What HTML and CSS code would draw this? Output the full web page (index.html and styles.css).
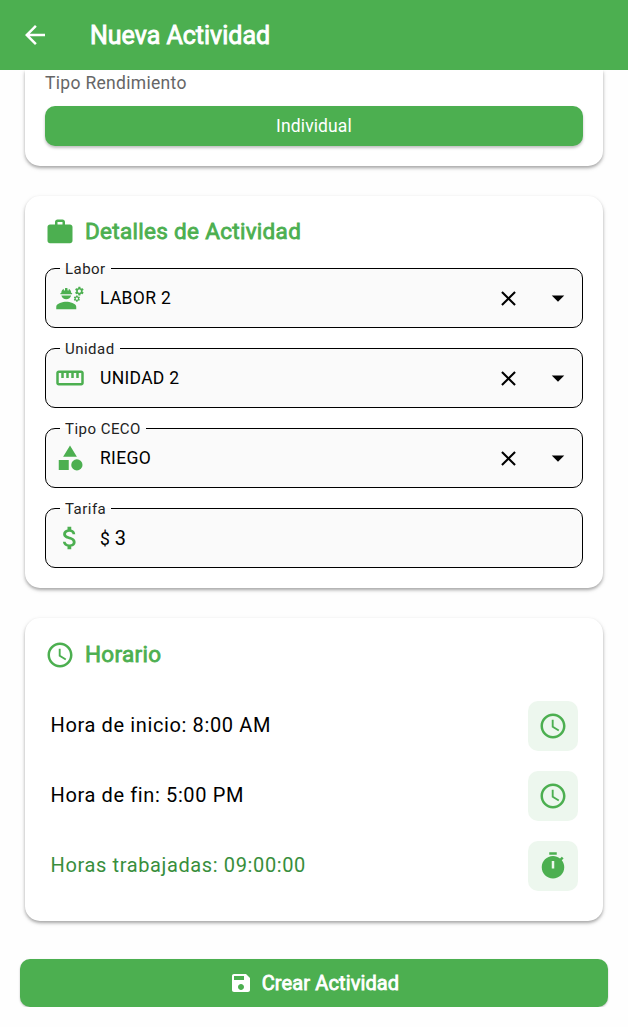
FILE: index.html
```html
<!DOCTYPE html>
<html lang="es">
<head>
<meta charset="utf-8">
<title>Nueva Actividad</title>
<link rel="stylesheet" href="styles.css">
</head>
<body>
<svg class="sprite" aria-hidden="true">
  <symbol id="clock" viewBox="0 0 24 24"><path d="M11.99 2C6.47 2 2 6.48 2 12s4.47 10 9.99 10C17.52 22 22 17.52 22 12S17.52 2 11.99 2zM12 20c-4.42 0-8-3.58-8-8s3.58-8 8-8 8 3.58 8 8-3.58 8-8 8zM12.5 7H11v6l5.25 3.15.75-1.23-4.5-2.67z"/></symbol>
  <symbol id="close" viewBox="0 0 24 24"><path d="M19 6.41L17.59 5 12 10.59 6.41 5 5 6.41 10.59 12 5 17.59 6.41 19 12 13.41 17.59 19 19 17.59 13.41 12z"/></symbol>
  <symbol id="drop" viewBox="0 0 24 24"><path d="M7 10l5 5 5-5z"/></symbol>
</svg>

<header class="app-bar">
  <svg class="icon" viewBox="0 0 24 24"><path d="M20 11H7.83l5.59-5.59L12 4l-8 8 8 8 1.41-1.41L7.83 13H20v-2z"/></svg>
  <h1 class="app-title">Nueva Actividad</h1>
</header>

<main class="content">
  <section class="card card-scrolled">
    <p class="caption">Tipo Rendimiento</p>
    <button class="segment">Individual</button>
  </section>

  <section class="card card-details">
    <h2 class="card-title">
      <svg class="icon" viewBox="0 0 24 24"><path d="M20 6h-4V4c0-1.11-.89-2-2-2h-4c-1.11 0-2 .89-2 2v2H4c-1.11 0-1.99.89-1.99 2L2 19c0 1.11.89 2 2 2h16c1.11 0 2-.89 2-2V8c0-1.11-.89-2-2-2zm-6 0h-4V4h4v2z"/></svg>
      <span>Detalles de Actividad</span>
    </h2>
    <fieldset class="field">
      <legend>Labor</legend>
      <div class="field-row">
        <svg class="icon green" viewBox="0 0 24 24"><path d="M9 15c-2.67 0-8 1.34-8 4v2h16v-2c0-2.66-5.33-4-8-4zM4.74 9H13.26c.27 0 .49-.22.49-.49v-.02c0-.27-.22-.49-.49-.49H13c0-1.48-.81-2.75-2-3.45v.95c0 .28-.22.5-.5.5s-.5-.22-.5-.5V4.14C9.68 4.06 9.35 4 9 4s-.68.06-1 .14V5.5c0 .28-.22.5-.5.5S7 5.78 7 5.5v-.95C5.81 5.25 5 6.52 5 8h-.26c-.27 0-.49.22-.49.49v.03c0 .26.22.48.49.48zM5.1 10c.4 1.8 2 3 3.9 3s3.5-1.2 3.9-3z"/><path d="M21.98 6.23l.93-.83-.75-1.3-1.19.39c-.14-.11-.3-.2-.47-.27L20.25 3h-1.5l-.25 1.22c-.17.07-.33.16-.48.27l-1.18-.39-.75 1.3.93.83c-.02.17-.02.35 0 .52l-.93.85.75 1.3 1.2-.38c.13.1.28.18.43.25l.28 1.23h1.5l.27-1.22c.16-.07.3-.15.44-.25l1.19.38.75-1.3-.93-.85c.03-.19.02-.36.01-.53zM19.5 7.75c-.69 0-1.25-.56-1.25-1.25s.56-1.25 1.25-1.25 1.25.56 1.25 1.25-.56 1.25-1.25 1.25zM19.4 10.79l-.85.28c-.1-.08-.21-.14-.33-.19l-.18-.88h-1.07l-.18.87c-.12.05-.24.12-.34.19l-.84-.28-.54.93.66.59c-.01.13-.01.25 0 .37l-.66.61.54.93.86-.27c.1.07.2.13.31.18l.18.88h1.07l.19-.87c.11-.05.22-.11.32-.18l.85.27.54-.93-.66-.61c.01-.13.01-.25 0-.37l.66-.59-.53-.93zm-1.9 2.6c-.49 0-.89-.4-.89-.89s.4-.89.89-.89.89.4.89.89-.4.89-.89.89z"/></svg>
        <span class="value">LABOR 2</span>
        <svg class="icon close"><use href="#close"/></svg>
        <svg class="icon"><use href="#drop"/></svg>
      </div>
    </fieldset>
    <fieldset class="field">
      <legend>Unidad</legend>
      <div class="field-row">
        <svg class="icon green" viewBox="0 0 24 24"><path d="M21 6H3c-1.1 0-2 .9-2 2v8c0 1.1.9 2 2 2h18c1.1 0 2-.9 2-2V8c0-1.1-.9-2-2-2zm0 10H3V8h2v4h2V8h2v4h2V8h2v4h2V8h2v4h2V8h2v8z"/></svg>
        <span class="value">UNIDAD 2</span>
        <svg class="icon close"><use href="#close"/></svg>
        <svg class="icon"><use href="#drop"/></svg>
      </div>
    </fieldset>
    <fieldset class="field">
      <legend>Tipo CECO</legend>
      <div class="field-row">
        <svg class="icon green" viewBox="0 0 24 24"><path d="M12 2l-5.5 9h11zM3 13.5h8v8H3z"/><circle cx="17.5" cy="17.5" r="4.5"/></svg>
        <span class="value">RIEGO</span>
        <svg class="icon close"><use href="#close"/></svg>
        <svg class="icon"><use href="#drop"/></svg>
      </div>
    </fieldset>
    <fieldset class="field">
      <legend>Tarifa</legend>
      <div class="field-row">
        <svg class="icon green" viewBox="0 0 24 24"><path d="M11.8 10.9c-2.27-.59-3-1.2-3-2.15 0-1.09 1.01-1.85 2.7-1.85 1.78 0 2.44.85 2.5 2.1h2.21c-.07-1.72-1.12-3.3-3.21-3.81V3h-3v2.16c-1.94.42-3.5 1.68-3.5 3.61 0 2.31 1.91 3.46 4.7 4.13 2.5.6 3 1.48 3 2.41 0 .69-.49 1.79-2.7 1.79-2.06 0-2.87-.92-2.98-2.1h-2.2c.12 2.19 1.76 3.42 3.68 3.83V21h3v-2.15c1.95-.37 3.5-1.5 3.5-3.55 0-2.84-2.43-3.81-4.7-4.4z"/></svg>
        <span class="value">$ <span class="amount">3</span></span>
      </div>
    </fieldset>
  </section>

  <section class="card card-schedule">
    <h2 class="card-title">
      <svg class="icon"><use href="#clock"/></svg>
      <span>Horario</span>
    </h2>
    <div class="time-list">
      <div class="time-row"><span class="time">Hora de inicio: 8:00 AM</span><button class="tile"><svg class="icon"><use href="#clock"/></svg></button></div>
      <div class="time-row"><span class="time">Hora de fin: 5:00 PM</span><button class="tile"><svg class="icon"><use href="#clock"/></svg></button></div>
      <div class="time-row total"><span class="time">Horas trabajadas: 09:00:00</span><button class="tile"><svg class="icon" viewBox="0 0 24 24"><path fill-rule="evenodd" d="M15 1H9v2h6V1zm-4 13h2V8h-2v6zm8.03-6.61l1.42-1.42c-.43-.51-.9-.99-1.41-1.41l-1.42 1.42C16.07 4.74 14.12 4 12 4c-4.97 0-9 4.03-9 9s4.02 9 9 9 9-4.03 9-9c0-2.12-.74-4.07-1.97-5.61z"/></svg></button></div>
    </div>
  </section>

  <button class="submit">
    <svg class="icon" viewBox="0 0 24 24"><path d="M17 3H5c-1.11 0-2 .9-2 2v14c0 1.1.89 2 2 2h14c1.1 0 2-.9 2-2V7l-4-4zm-5 16c-1.66 0-3-1.34-3-3s1.34-3 3-3 3 1.34 3 3-1.34 3-3 3zm3-10H5V5h10v4z"/></svg>
    <span>Crear Actividad</span>
  </button>
</main>
</body>
</html>
```
FILE: styles.css
```css
* { box-sizing: border-box; }
body {
  margin: 0;
  background: #fefefe;
  color: #000;
  font-family: Roboto, sans-serif;
}
h1, h2, p { margin: 0; font-weight: 400; }
button { border: 0; padding: 0; font-family: inherit; }
.sprite { position: absolute; width: 0; height: 0; }
.icon { display: block; flex: none; width: 30px; height: 30px; fill: currentColor; }
.green { color: #4caf50; }

.app-bar {
  display: flex;
  align-items: center;
  gap: 40px;
  height: 70px;
  padding-left: 20px;
  background: #4caf50;
  color: #fff;
}
.app-title {
  padding-top: 2px;
  font-size: 25px;
  line-height: 30px;
  -webkit-text-stroke: 0.9px currentColor;
}

.content { display: flex; flex-direction: column; }
.card {
  margin: 0 25px 30px;
  padding: 20px;
  border-radius: 15px;
  background: #fff;
  box-shadow: 0 2px 3px rgba(0, 0, 0, .25), 0 2px 5px rgba(0, 0, 0, .13);
}
.card-scrolled {
  height: 95.5px;
  padding-top: 2px;
  border-radius: 0 0 15px 15px;
  clip-path: inset(0 -10px -10px);
}
.caption {
  color: #666;
  font-size: 17.5px;
  line-height: 22px;
  letter-spacing: .31px;
}
.segment {
  display: block;
  width: 100%;
  height: 40px;
  margin-top: 12px;
  border-radius: 10px;
  background: #4caf50;
  color: #fff;
  font-size: 17.5px;
  letter-spacing: .12px;
  box-shadow: 0 2px 3px rgba(0, 0, 0, .25);
}

.card-title {
  display: flex;
  align-items: center;
  gap: 10px;
  height: 30px;
  color: #4caf50;
  font-size: 22.5px;
  letter-spacing: .3px;
  -webkit-text-stroke: .8px currentColor;
}
.card-title .icon { -webkit-text-stroke: 0; }
.card-details { height: 392.5px; }
.card-details .card-title { margin-bottom: 14.5px; }
.card-details .card-title .icon { margin-top: 2px; }

.field {
  height: 68px;
  min-width: 0;
  margin: 0 0 12px;
  padding: 0;
  border: 1px solid #000;
  border-radius: 10px;
  background: #fafafa;
}
.field legend {
  height: 17px;
  margin-left: 14px;
  padding: 0 5px;
  color: #222;
  font-size: 15px;
  line-height: 19px;
  letter-spacing: .47px;
}
.field-row {
  display: flex;
  align-items: center;
  height: 42px;
  padding: 0 9px;
}
.value {
  flex: 1;
  margin-left: 15px;
  font-size: 17.5px;
  letter-spacing: .31px;
}
.amount { font-size: 20px; }
.close { width: 25px; height: 25px; margin-right: 22.5px; }

.card-schedule { height: 303px; }
.card-schedule .card-title { margin-top: 2px; }
.card-schedule .card-title span { padding-bottom: 2px; }
.time-list {
  display: flex;
  flex-direction: column;
  gap: 20px;
  padding: 31px 5px 0;
}
.time-row {
  display: flex;
  align-items: center;
  justify-content: space-between;
  height: 50px;
  font-size: 20px;
  letter-spacing: .625px;
}
.time { padding: 0 0 2px .5px; }
.total { color: #388e3c; }
.tile {
  display: grid;
  place-items: center;
  width: 50px;
  height: 50px;
  border-radius: 10px;
  background: #edf7ee;
  color: #4caf50;
}

.submit {
  display: flex;
  align-items: center;
  justify-content: center;
  gap: 9px;
  height: 48.5px;
  margin: 7.5px 20px 0;
  border-radius: 10px;
  background: #4caf50;
  color: #fff;
  font-size: 20px;
  letter-spacing: .12px;
  -webkit-text-stroke: .8px currentColor;
  box-shadow: 0 1px 2px rgba(0, 0, 0, .25);
}
.submit .icon { width: 24px; height: 24px; -webkit-text-stroke: 0; }
```
